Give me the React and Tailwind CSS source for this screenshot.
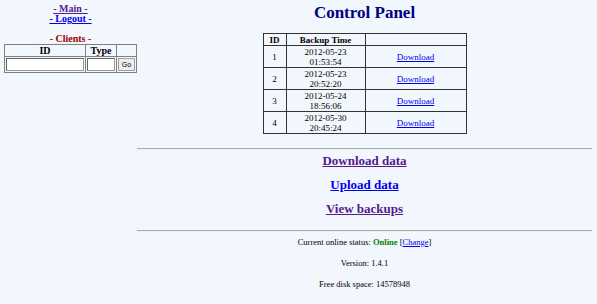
export default function App() {
  const rows = [
    ["1", "2012-05-23", "01:53:54"],
    ["2", "2012-05-23", "20:52:20"],
    ["3", "2012-05-24", "18:56:06"],
    ["4", "2012-05-30", "20:45:24"],
  ];
  return (
    <div className="w-[597px] h-[304px] bg-[#f2f7fd] flex text-black overflow-hidden" style={{ fontFamily: '"Liberation Serif", "Times New Roman", serif' }}>
      <div className="w-[137px] shrink-0 pl-[4px] pt-[4px] flex flex-col items-stretch">
        <div className="text-center text-[10px] leading-[10px] font-bold">
          <a href="#" className="underline text-[#551a8b]">- Main -</a>
        </div>
        <div className="text-center text-[10px] leading-[10px] font-bold">
          <a href="#" className="underline text-[#0000ee]">- Logout -</a>
        </div>
        <div className="text-center text-[10px] leading-[10px] font-bold text-[#a00000] mt-[10px]">- Clients -</div>
        <table className="w-[133px] border-collapse border border-[#808080] text-[10px]">
          <thead>
            <tr className="h-[12px]">
              <th className="border border-[#808080] w-[81px] leading-[10px] p-0">ID</th>
              <th className="border border-[#808080] w-[31px] leading-[10px] p-0">Type</th>
              <th className="border border-[#808080] p-0"></th>
            </tr>
          </thead>
          <tbody>
            <tr className="h-[15px]">
              <td className="border border-[#808080] p-[1px]">
                <div className="h-[13px] bg-white border border-[#999] border-t-[#666] border-l-[#666]"></div>
              </td>
              <td className="border border-[#808080] p-[1px]">
                <div className="h-[13px] bg-white border border-[#999] border-t-[#666] border-l-[#666]"></div>
              </td>
              <td className="border border-[#808080] p-[1px]">
                <div className="h-[13px] bg-[#ececec] border border-[#a0a0a0] text-[7px] leading-[11px] text-center" style={{ fontFamily: '"Liberation Sans", Arial, sans-serif' }}>Go</div>
              </td>
            </tr>
          </tbody>
        </table>
      </div>
      <div className="flex-1 pr-[5px] flex flex-col items-center">
        <h1 className="mt-[3px] text-[17px] leading-[20px] font-bold text-[#000080]">Control Panel</h1>
        <table className="mt-[10px] w-[204px] border-collapse border border-[#333] text-[9px] text-center">
          <thead>
            <tr className="h-[12px]">
              <th className="border border-[#333] w-[23px] p-0 leading-[10px]">ID</th>
              <th className="border border-[#333] w-[79px] p-0 leading-[10px]">Backup Time</th>
              <th className="border border-[#333] p-0"></th>
            </tr>
          </thead>
          <tbody>
            {rows.map((r) => (
              <tr key={r[0]} className="h-[22px]">
                <td className="border border-[#333] p-0 leading-[10px]">{r[0]}</td>
                <td className="border border-[#333] p-0 leading-[10px]">
                  {r[1]}
                  <br />
                  {r[2]}
                </td>
                <td className="border border-[#333] p-0 leading-[10px]">
                  <a href="#" className="underline text-[#0000ee]">Download</a>
                </td>
              </tr>
            ))}
          </tbody>
        </table>
        <div className="self-stretch mt-[14px] h-[2px] border-t border-[#aaa] border-b-[#eee] border-b"></div>
        <div className="mt-[3px] text-[13px] leading-[15px] font-bold">
          <a href="#" className="underline text-[#551a8b]">Download data</a>
        </div>
        <div className="mt-[9px] text-[13px] leading-[15px] font-bold">
          <a href="#" className="underline text-[#0000ee]">Upload data</a>
        </div>
        <div className="mt-[9px] text-[13px] leading-[15px] font-bold">
          <a href="#" className="underline text-[#551a8b]">View backups</a>
        </div>
        <div className="self-stretch mt-[14px] h-[2px] border-t border-[#aaa] border-b-[#eee] border-b"></div>
        <div className="mt-[5px] text-[8.5px] leading-[10px]">
          Current online status: <span className="font-bold text-[#008000]">Online</span> [<a href="#" className="underline text-[#0000ee]">Change</a>]
        </div>
        <div className="mt-[11px] text-[8.5px] leading-[10px]">Version: 1.4.1</div>
        <div className="mt-[11px] text-[8.5px] leading-[10px]">Free disk space: 14578948</div>
      </div>
    </div>
  );
}
